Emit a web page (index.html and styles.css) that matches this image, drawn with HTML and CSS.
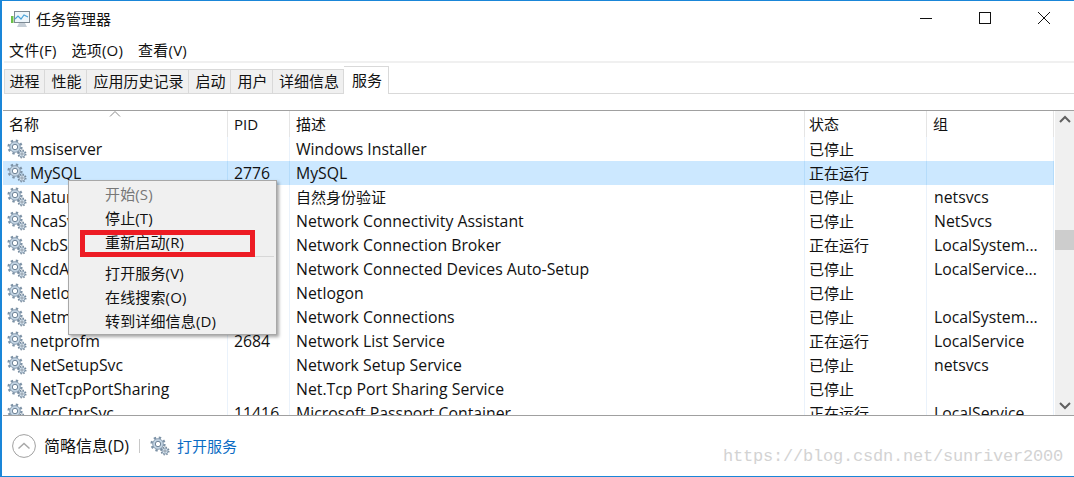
FILE: index.html
```html
<!DOCTYPE html>
<html lang="zh-CN">
<head>
<meta charset="utf-8">
<title>任务管理器</title>
<link rel="stylesheet" href="styles.css">
</head>
<body>
<svg class="defs" width="0" height="0">
  <defs>
    <symbol id="gear" viewBox="0 0 20 20">
      <circle cx="8" cy="8" r="6.300" fill="none" stroke="#7d92a6" stroke-width="2.600" stroke-dasharray="2.300 2.650"/>
      <circle cx="8" cy="8" r="5.300" fill="#c3d4e3" stroke="#8ea2b5"/>
      <circle cx="8" cy="8" r="2.700" fill="#fff" stroke="#6f8498"/>
      <circle cx="15" cy="15" r="3.600" fill="none" stroke="#74889b" stroke-width="1.800" stroke-dasharray="1.400 1.430"/>
      <circle cx="15" cy="15" r="3" fill="#d5e1eb" stroke="#8ea2b5"/>
      <circle cx="15" cy="15" r="1.100" fill="#fff" stroke="#5f7386" stroke-width=".7"/>
    </symbol>
  </defs>
</svg>
<div class="window">
  <header class="titlebar">
    <svg class="appicon" width="20" height="18" viewBox="0 0 20 18">
      <rect x="3.500" y="1.500" width="15" height="11" fill="#eef6fb" stroke="#7d8a94"/>
      <path d="M4 9l3-3 3 3 3-4 4 2" fill="none" stroke="#4aa3d8" stroke-width="1.200"/>
      <rect x="0" y="6" width="2.500" height="7" fill="#6cc04a"/>
      <path d="M8 13h6l2 4H6z" fill="#c5ced6"/>
    </svg>
    <span class="title">任务管理器</span>
    <div class="winbtns">
      <svg class="winbtn" width="46" height="20" viewBox="0 0 46 20"><path d="M17 9.500h12" stroke="#111" fill="none"/></svg>
      <svg class="winbtn" width="46" height="20" viewBox="0 0 46 20"><rect x="17.500" y="3.500" width="11" height="11" stroke="#111" fill="none"/></svg>
      <svg class="winbtn" width="46" height="20" viewBox="0 0 46 20"><path d="M17 3l12 12M29 3L17 15" stroke="#111" fill="none"/></svg>
    </div>
  </header>
  <nav class="menubar">
    <span>文件(F)</span><span>选项(O)</span><span>查看(V)</span>
  </nav>
  <div class="tabs">
    <span class="tab w41">进程</span>
    <span class="tab w42">性能</span>
    <span class="tab w102">应用历史记录</span>
    <span class="tab w42">启动</span>
    <span class="tab w42">用户</span>
    <span class="tab w71">详细信息</span>
    <span class="tab active">服务</span>
  </div>
  <div class="tabgap"></div>
  <main class="content">
    <div class="list">
      <div class="row head">
        <div class="cell sort">名称<svg class="caret" width="12" height="6" viewBox="0 0 12 6"><path d="M1 5.500l5-5 5 5" fill="none" stroke="#8a8a8a"/></svg></div>
        <div class="cell">PID</div><div class="cell">描述</div><div class="cell status">状态</div><div class="cell">组</div>
      </div>
      <div class="rows">
        <div class="row"><div class="cell name en"><svg class="gear"><use href="#gear"/></svg>msiserver</div><div class="cell"></div><div class="cell en">Windows Installer</div><div class="cell status">已停止</div><div class="cell"></div></div>
        <div class="row selected"><div class="cell name en"><svg class="gear"><use href="#gear"/></svg>MySQL</div><div class="cell en">2776</div><div class="cell en">MySQL</div><div class="cell status">正在运行</div><div class="cell"></div></div>
        <div class="row"><div class="cell name en"><svg class="gear"><use href="#gear"/></svg>NaturalAuthentication</div><div class="cell"></div><div class="cell">自然身份验证</div><div class="cell status">已停止</div><div class="cell en grp">netsvcs</div></div>
        <div class="row"><div class="cell name en"><svg class="gear"><use href="#gear"/></svg>NcaSvc</div><div class="cell"></div><div class="cell en">Network Connectivity Assistant</div><div class="cell status">已停止</div><div class="cell en grp">NetSvcs</div></div>
        <div class="row"><div class="cell name en"><svg class="gear"><use href="#gear"/></svg>NcbService</div><div class="cell"></div><div class="cell en">Network Connection Broker</div><div class="cell status">正在运行</div><div class="cell en grp">LocalSystem...</div></div>
        <div class="row"><div class="cell name en"><svg class="gear"><use href="#gear"/></svg>NcdAutoSetup</div><div class="cell"></div><div class="cell en">Network Connected Devices Auto-Setup</div><div class="cell status">已停止</div><div class="cell en grp">LocalService...</div></div>
        <div class="row"><div class="cell name en"><svg class="gear"><use href="#gear"/></svg>Netlogon</div><div class="cell"></div><div class="cell en">Netlogon</div><div class="cell status">已停止</div><div class="cell"></div></div>
        <div class="row"><div class="cell name en"><svg class="gear"><use href="#gear"/></svg>Netman</div><div class="cell"></div><div class="cell en">Network Connections</div><div class="cell status">已停止</div><div class="cell en grp">LocalSystem...</div></div>
        <div class="row"><div class="cell name en"><svg class="gear"><use href="#gear"/></svg>netprofm</div><div class="cell en">2684</div><div class="cell en">Network List Service</div><div class="cell status">正在运行</div><div class="cell en grp">LocalService</div></div>
        <div class="row"><div class="cell name en"><svg class="gear"><use href="#gear"/></svg>NetSetupSvc</div><div class="cell"></div><div class="cell en">Network Setup Service</div><div class="cell status">已停止</div><div class="cell en grp">netsvcs</div></div>
        <div class="row"><div class="cell name en"><svg class="gear"><use href="#gear"/></svg>NetTcpPortSharing</div><div class="cell"></div><div class="cell en">Net.Tcp Port Sharing Service</div><div class="cell status">已停止</div><div class="cell"></div></div>
        <div class="row"><div class="cell name en"><svg class="gear"><use href="#gear"/></svg>NgcCtnrSvc</div><div class="cell en">11416</div><div class="cell en">Microsoft Passport Container</div><div class="cell status">正在运行</div><div class="cell en grp">LocalService</div></div>
      </div>
    </div>
    <div class="scrollbar">
      <svg width="20" height="12" viewBox="0 0 20 12"><path d="M5 9l5-5 5 5" fill="none" stroke="#606060" stroke-width="2"/></svg>
      <div class="track"><div class="thumb"></div></div>
      <svg width="20" height="12" viewBox="0 0 20 12"><path d="M5 3l5 5 5-5" fill="none" stroke="#606060" stroke-width="2"/></svg>
    </div>
  </main>
  <footer class="footer">
    <svg class="circlebtn" width="24" height="24" viewBox="0 0 24 24"><circle cx="12" cy="12" r="11.400" fill="#fff" stroke="#a0a0a0"/><path d="M6.500 14.500l5.500-5 5.500 5" fill="none" stroke="#a8a8a8" stroke-width="1.500"/></svg>
    <span class="less">简略信息(D)</span>
    <span class="divider"></span>
    <svg class="gear footgear"><use href="#gear"/></svg>
    <span class="link">打开服务</span>
  </footer>
</div>
<div class="menu">
  <div class="mi disabled">开始(S)</div>
  <div class="mi">停止(T)</div>
  <div class="mi">重新启动(R)</div>
  <div class="sep"></div>
  <div class="mi">打开服务(V)</div>
  <div class="mi">在线搜索(O)</div>
  <div class="mi">转到详细信息(D)</div>
</div>
<div class="redbox"></div>
<div class="watermark">https://blog.csdn.net/sunriver2000</div>
</body>
</html>
```
FILE: styles.css
```css
* { box-sizing: border-box; }
html, body { margin: 0; height: 100%; }
body {
  width: 1074px;
  height: 477px;
  overflow: hidden;
  background: #fff;
  color: #111;
  font: 15px/24px "Open Sans", "Noto Sans CJK SC", sans-serif;
  position: relative;
}
.defs { position: absolute; }
.window {
  height: 477px;
  border-top: 1px solid #1a86d8;
  border-bottom: 1px solid #1a86d8;
  border-left: 2px solid #1a86d8;
  display: flex;
  flex-direction: column;
}
.titlebar {
  height: 36px;
  display: flex;
  align-items: center;
  padding: 0 0 0 9px;
}
.appicon { margin-right: 5px; }
.winbtns { margin-left: auto; display: flex; margin-right: 7px; gap: 13px; }
.winbtn { display: block; }
.menubar {
  height: 24px;
  display: flex;
  gap: 15px;
  padding-left: 7px;
  line-height: 26px;
  letter-spacing: .2px;
}
.tabs {
  height: 33px;
  margin-left: 2px;
  border-top: 2px solid #f0f0f0;
  display: flex;
  align-items: flex-end;
  position: relative;
  background: #fff;
}
.tabs::after {
  content: "";
  position: absolute;
  left: 0; right: 0; bottom: 0;
  height: 1px;
  background: #d9d9d9;
}
.tab {
  height: 25px;
  padding-left: 2px;
  background: #f0f0f0;
  border: 1px solid #d9d9d9;
  border-left-width: 0;
  text-align: center;
  line-height: 23px;
}
.tab:first-child { border-left-width: 1px; padding-left: 0; }
.w41 { width: 41px; }
.w42 { width: 42px; }
.w102 { width: 102px; }
.w71 { width: 71px; }
.tab.active {
  width: 45px;
  height: 28px;
  background: #fff;
  border-bottom: 0;
  position: relative;
  z-index: 1;
  line-height: 26px;
}
.tabgap { height: 16px; }
.content {
  height: 306px;
  margin-left: 1px;
  border-top: 1px solid #a0a0a0;
  border-bottom: 1px solid #a0a0a0;
  display: flex;
  overflow: hidden;
}
.list { width: 1051px; flex: none; }
.row {
  display: grid;
  grid-template-columns: 225px 62px 515px 122px 127px;
  height: 24px;
  line-height: 24px;
}
.cell {
  padding-left: 6px;
  white-space: nowrap;
  overflow: hidden;
  border-right: 1px solid #eaf2fb;
}
.en { font-size: 15.8px; }
.status { padding-left: 4px; }
.grp { padding-left: 7px; }
.head { height: 26px; line-height: 27px; }
.head .cell { border-right: 1px solid #e5e5e5; position: relative; }
.caret { position: absolute; left: 106px; top: 0; }
.name { display: flex; align-items: center; padding-left: 4px; }
.selected { background: #cce8ff; }
.selected .cell { border-right-color: #b5dcfb; }
.gear { width: 20px; height: 20px; margin-right: 3px; flex: none; }
.scrollbar {
  width: 20px;
  background: #f0f0f0;
  margin-left: 1px;
  display: flex;
  flex-direction: column;
  padding: 2px 0 3px;
}
.track { flex: 1; position: relative; }
.thumb { position: absolute; top: 105px; left: 0; right: 0; height: 20px; background: #cdcdcd; }
.footer {
  flex: 1;
  display: flex;
  align-items: center;
  padding: 0 0 0 9px;
  margin-left: 1px;
}
.less { margin-left: 8px; font-size: 16px; }
.divider { width: 1px; height: 14px; background: #c8c8c8; margin: 0 10px; }
.footgear { margin-right: 7px; }
.link { color: #0a6cc4; }
.menu {
  position: absolute;
  left: 68px;
  top: 180px;
  width: 209px;
  height: 155px;
  background: #f0f0f0;
  border: 1px solid #a8a8a8;
  box-shadow: 2px 2px 3px rgba(0,0,0,.35);
  padding-top: 1px;
  letter-spacing: .15px;
}
.mi { height: 24px; line-height: 24px; padding-left: 36px; }
.mi.disabled { color: #777; }
.sep { height: 1px; background: #d7d7d7; margin: 2px 2px 4px 32px; }
.redbox {
  position: absolute;
  left: 80px;
  top: 230px;
  width: 175px;
  height: 27px;
  border: 5px solid #ed1c24;
}
.watermark {
  position: absolute;
  left: 723px;
  top: 445px;
  font: 17px/24px "Liberation Mono", monospace;
  color: #d3d3d3;
  letter-spacing: -.2px;
  white-space: nowrap;
}
```
